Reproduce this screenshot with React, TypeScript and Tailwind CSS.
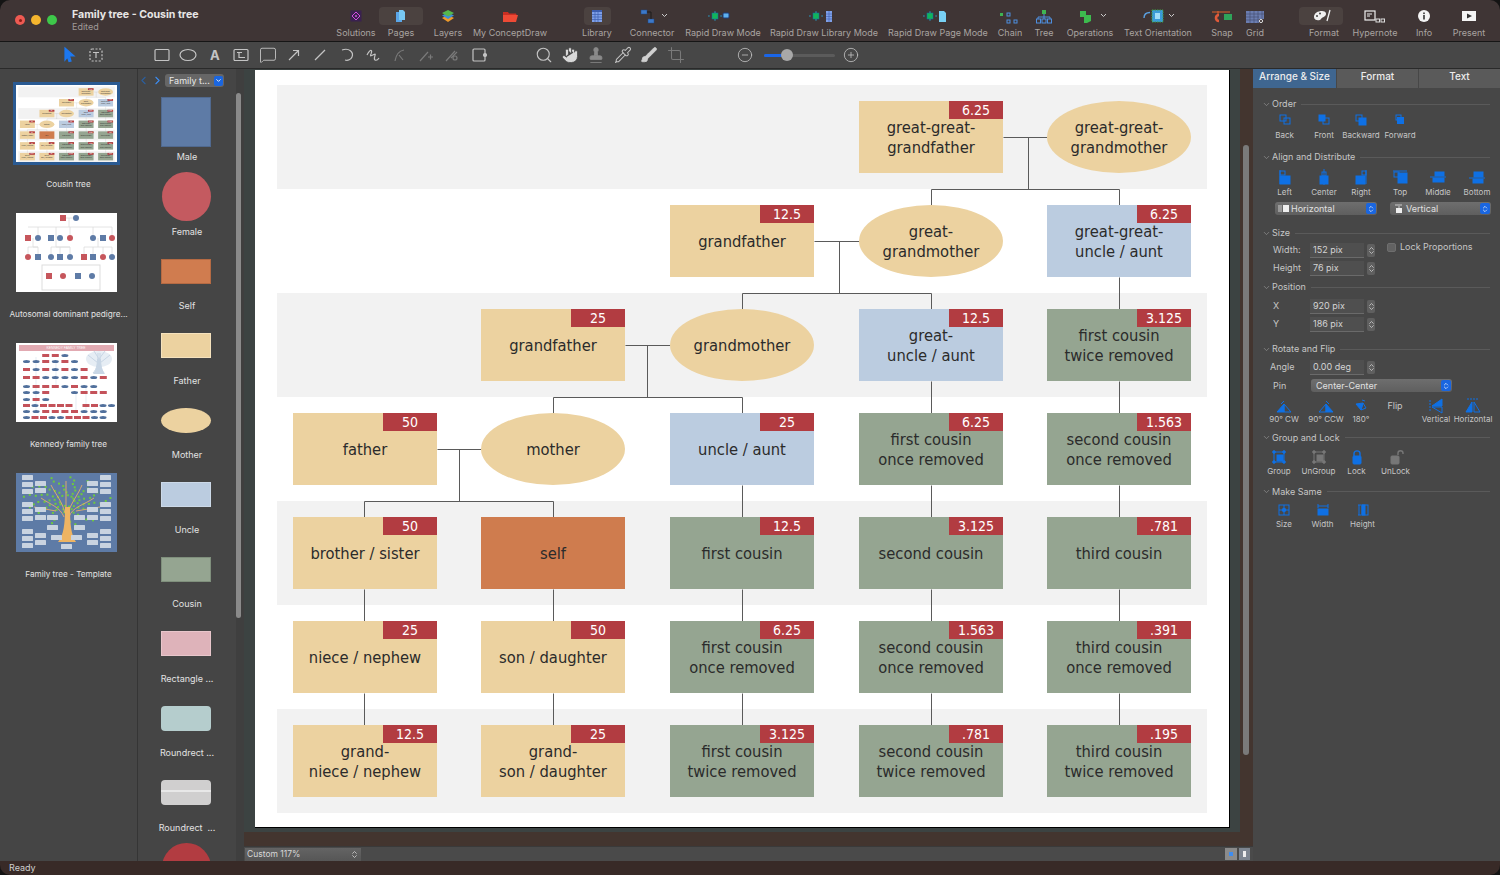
import React from "react";
import { Search, Hand, Pipette, Crop, CirclePlus, CircleMinus, MessageSquare, Stamp, Brush, ChevronLeft, ChevronRight, ChevronDown, ChevronsUpDown } from "lucide-react";

const TAN = "#ecd2a0", BLUE = "#bbcce0", GREEN = "#95a591", ORANGE = "#cf7c4e";
const COLS = [38, 226, 415, 604, 792];
const ROWS = [31, 135, 239, 343, 447, 551, 655];
type N = { c: number; r: number; t: string[]; tag?: string; fill: string; oval?: boolean };
const NODES: N[] = [
  { c: 3, r: 0, t: ["great-great-", "grandfather"], tag: "6.25", fill: TAN },
  { c: 4, r: 0, t: ["great-great-", "grandmother"], fill: TAN, oval: true },
  { c: 2, r: 1, t: ["grandfather"], tag: "12.5", fill: TAN },
  { c: 3, r: 1, t: ["great-", "grandmother"], fill: TAN, oval: true },
  { c: 4, r: 1, t: ["great-great-", "uncle / aunt"], tag: "6.25", fill: BLUE },
  { c: 1, r: 2, t: ["grandfather"], tag: "25", fill: TAN },
  { c: 2, r: 2, t: ["grandmother"], fill: TAN, oval: true },
  { c: 3, r: 2, t: ["great-", "uncle / aunt"], tag: "12.5", fill: BLUE },
  { c: 4, r: 2, t: ["first cousin", "twice removed"], tag: "3.125", fill: GREEN },
  { c: 0, r: 3, t: ["father"], tag: "50", fill: TAN },
  { c: 1, r: 3, t: ["mother"], fill: TAN, oval: true },
  { c: 2, r: 3, t: ["uncle / aunt"], tag: "25", fill: BLUE },
  { c: 3, r: 3, t: ["first cousin", "once removed"], tag: "6.25", fill: GREEN },
  { c: 4, r: 3, t: ["second cousin", "once removed"], tag: "1.563", fill: GREEN },
  { c: 0, r: 4, t: ["brother / sister"], tag: "50", fill: TAN },
  { c: 1, r: 4, t: ["self"], fill: ORANGE },
  { c: 2, r: 4, t: ["first cousin"], tag: "12.5", fill: GREEN },
  { c: 3, r: 4, t: ["second cousin"], tag: "3.125", fill: GREEN },
  { c: 4, r: 4, t: ["third cousin"], tag: ".781", fill: GREEN },
  { c: 0, r: 5, t: ["niece / nephew"], tag: "25", fill: TAN },
  { c: 1, r: 5, t: ["son / daughter"], tag: "50", fill: TAN },
  { c: 2, r: 5, t: ["first cousin", "once removed"], tag: "6.25", fill: GREEN },
  { c: 3, r: 5, t: ["second cousin", "once removed"], tag: "1.563", fill: GREEN },
  { c: 4, r: 5, t: ["third cousin", "once removed"], tag: ".391", fill: GREEN },
  { c: 0, r: 6, t: ["grand-", "niece / nephew"], tag: "12.5", fill: TAN },
  { c: 1, r: 6, t: ["grand-", "son / daughter"], tag: "25", fill: TAN },
  { c: 2, r: 6, t: ["first cousin", "twice removed"], tag: "3.125", fill: GREEN },
  { c: 3, r: 6, t: ["second cousin", "twice removed"], tag: ".781", fill: GREEN },
  { c: 4, r: 6, t: ["third cousin", "twice removed"], tag: ".195", fill: GREEN },
];
const BANDS = [15, 223, 431, 639];
const LINES = "M748 67H792M773 67V119M676 119H864V135M676 119V135M559 171H604M584 171V223M487 223H676V239M487 223V239M864 207V239M864 311V343M864 415V447M864 519V551M864 623V655M370 275H415M392 275V327M298 327H487V343M298 327V343M676 311V343M676 415V447M676 519V551M676 623V655M487 415V447M487 519V551M487 623V655M182 379H226M204 379V431M109 431H298V447M109 431V447M109 519V551M109 623V655M298 519V551M298 623V655";

function Diagram() {
  return (
    <div className="relative w-[974px] h-[757px] bg-white font-['DejaVu_Sans',sans-serif] [font-stretch:condensed]">
      {BANDS.map((y) => (
        <div key={y} className="absolute left-[22px] w-[930px] h-[104px] bg-[#f2f2f2]" style={{ top: y }} />
      ))}
      <svg className="absolute inset-0" width="974" height="757" fill="none">
        <path d={LINES} stroke="#5a5a5a" strokeWidth="1" transform="translate(0.5 0.5)" />
      </svg>
      {NODES.map((n, i) => (
        <div
          key={i}
          className={"absolute w-[144px] h-[72px] pt-[2px] flex flex-col items-center justify-center text-[16.400px] leading-[20px] text-[#2b2b2b] " + (n.oval ? "rounded-[50%]" : "")}
          style={{ left: COLS[n.c], top: ROWS[n.r], background: n.fill }}
        >
          {n.t.map((l) => (
            <span key={l} className="whitespace-nowrap">{l}</span>
          ))}
          {n.tag && (
            <span className="absolute right-0 top-0 w-[54px] h-[18px] bg-[#b23c41] text-white text-[14px] leading-[18px] text-center">{n.tag}</span>
          )}
        </div>
      ))}
    </div>
  );
}

function PedigreeThumb() {
  const sq = (x: number, y: number, c: string, k: string) => <rect key={k} x={x - 3} y={y - 3} width="6" height="6" fill={c} />;
  const ci = (x: number, y: number, c: string, k: string) => <circle key={k} cx={x} cy={y} r="3" fill={c} />;
  const R = "#c6565c", B = "#5e7ba6";
  return (
    <svg width="101" height="79" className="bg-white block">
      <path d="M47 5H60M53 5V14M12 14H96V25M22 14V25M40 14V25M54 14V25M77 14V25M17 25V34H22M12 34H22M12 34V44M22 34V44M40 25V34H54M35 34H54M35 34V44M54 34V44M44 34V44M82 25V34M68 34H96M68 34V44M77 34V44M87 34V44M96 34V44" stroke="#ddd" strokeWidth="0.8" fill="none" />
      <rect x="26" y="52" width="58" height="25" fill="#fff" stroke="#ddd" strokeWidth="1" />
      {sq(47, 5, R, "a")}{ci(60, 5, B, "b")}
      {sq(12, 25, R, "c")}{ci(22, 25, B, "d")}{sq(35, 25, B, "e")}{ci(44, 25, B, "f")}{ci(54, 25, R, "g")}{ci(77, 25, B, "h")}{sq(87, 25, B, "i")}{ci(96, 25, R, "j")}
      {ci(12, 44, R, "k")}{sq(22, 44, B, "l")}{ci(35, 44, B, "m")}{sq(44, 44, B, "n")}{ci(54, 44, B, "o")}{sq(68, 44, R, "p")}{sq(77, 44, B, "q")}{ci(87, 44, R, "r")}{ci(96, 44, B, "s")}
      {sq(33, 63, R, "t")}{ci(47, 63, R, "u")}{sq(62, 63, B, "v")}{ci(76, 63, B, "w")}
    </svg>
  );
}

function KennedyThumb() {
  const rows: [number, string][] = [
    [11, "..rrb"], [17, "bbrbrb"], [25, "rbrbrbr"], [33, "rrbbbbrbr"], [42, "brrrbrbb"], [48, "bbr..brrr"], [55, "brb"], [61, "rbrrrr.rrbb"], [67, "bbrrrrbbb"], [73, "brrbbrrrbb"],
  ];
  return (
    <svg width="101" height="79" className="bg-white block">
      <rect x="3" y="2" width="95" height="6" fill="#e2aab2" />
      <text x="50" y="6.3" fontSize="3.4" fill="#fff" textAnchor="middle" fontFamily="Liberation Sans">KENNEDY FAMILY TREE</text>
      <ellipse cx="83" cy="16" rx="13" ry="8" fill="#e6edf4" />
      <path d="M77 30C81 26 82 20 82 10M88 30C85 26 84 20 84 10M82 20L72 12M84 20L94 12M83 16L78 8M83 16L89 8" stroke="#c8d6e5" strokeWidth="1" fill="none" />
      <path d="M77 31C80 27 81 24 81 16H85C85 24 86 27 89 31Z" fill="#c8d6e5" />
      <path d="M20 14V70M60 50V70M70 44V68M40 20V42" stroke="#dbe5ef" strokeWidth="0.7" fill="none" />
      {rows.map(([y, s]) =>
        s.split("").map((ch, i) => {
          const x = 7 + i * (s.length > 9 ? 8.5 : 9.6);
          if (ch === ".") return null;
          return ch === "r" ? (
            <rect key={y + "-" + i} x={x} y={y} width="7" height="3" fill="#c4525a" />
          ) : (
            <ellipse key={y + "-" + i} cx={x + 3.5} cy={y + 1.5} rx="3.5" ry="1.5" fill="#51709c" />
          );
        })
      )}
    </svg>
  );
}

function TemplateThumb() {
  const cards: [number, number][] = [];
  [[6, 2], [6, 9], [6, 16], [6, 29], [6, 36], [6, 43], [6, 56], [6, 63], [6, 70], [19, 8], [19, 15], [19, 34], [19, 42], [19, 60], [19, 67], [84, 2], [84, 9], [84, 16], [84, 29], [84, 36], [84, 43], [84, 56], [84, 63], [84, 70], [71, 8], [71, 15], [71, 34], [71, 42], [71, 60], [71, 67], [31, 42], [31, 52], [58, 42], [58, 52], [35, 62], [55, 62], [45, 71]].forEach((c) => cards.push(c as [number, number]));
  const dots = Array.from({ length: 90 }, (_, i) => {
    const a = i * 2.399;
    const r = 6 + (i % 30);
    return [50 + Math.cos(a) * r * 1.25, 27 + Math.sin(a) * r * 0.72];
  });
  return (
    <svg width="101" height="79" className="bg-[#5e7ba6] block">
      {dots.map(([x, y], i) => (
        <rect key={i} x={x} y={y} width="2" height="2" fill="#6ecb3c" />
      ))}
      <path d="M25 25C35 32 44 34 48 44M78 25C68 32 56 34 53 44M35 12C40 22 46 28 49 40M66 12C62 22 56 28 52 40M50 8V44M18 34L40 38M84 34L60 38" stroke="#e7ae6a" strokeWidth="0.9" fill="none" />
      <path d="M42 69C48 62 49 50 49 34H54C54 50 55 62 60 69Z" fill="#eeb463" />
      {cards.map(([x, y], i) => (
        <rect key={i} x={x} y={y} width="11" height="5" rx="0.5" fill="#c9d3e0" />
      ))}
    </svg>
  );
}

function Thumb({ label, children, sel }: { label: string; children: React.ReactNode; sel?: boolean }) {
  return (
    <div className="h-[130px] flex flex-col items-center">
      <div className={"mr-[4px] w-[107px] h-[83px] flex justify-center " + (sel ? "bg-[#2a5a92] items-center" : "pt-px items-start")}>{children}</div>
      <div className="mt-[13px] text-[8.200px] leading-[12px] text-[#e2e2e2] whitespace-nowrap">{label}</div>
    </div>
  );
}

function LeftPanel() {
  return (
    <div className="w-[138px] shrink-0 border-r border-[#353535] pt-[13px] flex flex-col items-center bg-[#454545]">
      <Thumb label="Cousin tree" sel>
        <div className="w-[101px] h-[77px] overflow-hidden">
          <div className="origin-top-left scale-[0.1037]"><Diagram /></div>
        </div>
      </Thumb>
      <Thumb label="Autosomal dominant pedigre..."><PedigreeThumb /></Thumb>
      <Thumb label="Kennedy family tree"><KennedyThumb /></Thumb>
      <Thumb label="Family tree - Template"><TemplateThumb /></Thumb>
    </div>
  );
}

const LIB: { l: string; s: string; n?: boolean }[] = [
  { l: "Male", s: "w-[50px] h-[50px] bg-[#5e7ba6] border border-[#50698f]" },
  { l: "Female", s: "w-[49px] h-[49px] rounded-full bg-[#c45a60]" },
  { l: "Self", s: "w-[50px] h-[25px] bg-[#d07c4f] border border-[#b56a43]" },
  { l: "Father", s: "w-[50px] h-[25px] bg-[#ecd2a0] border border-[#f5e2bd]" },
  { l: "Mother", s: "w-[50px] h-[25px] rounded-[50%] bg-[#ecd2a0]" },
  { l: "Uncle", s: "w-[50px] h-[25px] bg-[#bbcce0] border border-[#ccd9e8]" },
  { l: "Cousin", s: "w-[50px] h-[25px] bg-[#95a591] border border-[#7f8f7c]" },
  { l: "Rectangle ...", s: "w-[50px] h-[25px] bg-[#deb3ba] border border-[#e8c6cb]" },
  { l: "Roundrect ...", s: "w-[50px] h-[25px] rounded-[4px] bg-[#b5cdcd]" },
  { l: "Roundrect  ...", s: "w-[50px] h-[25px] rounded-[4px] bg-[#d0cfcf]", n: true },
  { l: "", s: "w-[49px] h-[49px] rounded-full bg-[#b23c41]" },
];

function Library() {
  return (
    <div className="w-[98px] shrink-0 flex flex-col bg-[#454545]">
      <div className="h-[28px] shrink-0 flex items-center pb-[5px]">
        <ChevronLeft size={13} className="-ml-[1px] text-[#2b5f9e]" />
        <ChevronRight size={13} className="ml-[1px] text-[#3d8cf0]" />
        <div className="ml-[1px] w-[59px] h-[13px] rounded-[3px] bg-[#666] flex items-center pl-[4px] text-[9px] text-[#e8e8e8]">
          <span className="flex-1 whitespace-nowrap">Family t...</span>
          <span className="w-[9px] h-[10px] mr-[1px] rounded-[2px] bg-[#1a66e0] flex items-center justify-center"><ChevronDown size={7} className="text-white" strokeWidth={3} /></span>
        </div>
      </div>
      {LIB.map((x, i) => (
        <div key={i} className="h-[74.5px] shrink-0 flex flex-col items-center relative">
          <div className="h-[50px] mr-[2px] flex items-center justify-center">
            <div className={x.s + " relative overflow-hidden"}>
              {x.n && <div className="absolute left-0 right-0 top-[10px] h-[2px] bg-[#e8e8e8]" />}
            </div>
          </div>
          <div className="mt-[4px] h-[12px] text-[9px] leading-[12px] text-[#e2e2e2] whitespace-pre">{x.l}</div>
        </div>
      ))}
    </div>
  );
}

/* ---------- top toolbar icons ---------- */
const I = ({ children }: { children: React.ReactNode }) => (
  <svg width="30" height="18" viewBox="0 0 30 18" fill="none">{children}</svg>
);
const RD = (extra: React.ReactNode) => (
  <svg width="36" height="18" viewBox="0 0 36 18" fill="none">
    <rect x="7" y="6" width="6" height="6" fill="#13b45a" stroke="#0a6fae" strokeWidth="0.5" />
    <path d="M5 9L3.5 8V10ZM15 9L16.5 8V10ZM10 4L9 5.5H11ZM10 14L9 12.500H11Z" fill="#28a7d8" />
    {extra}
  </svg>
);
const ICONS: Record<string, React.ReactNode> = {
  Solutions: <I><rect x="9.500" y="3.500" width="11" height="11" fill="#3a2150" /><path d="M15 5L19 9L15 13L11 9Z" stroke="#d04fe0" strokeWidth="1" /><circle cx="15" cy="9" r="1" fill="#d04fe0" /></I>,
  Pages: <I><path d="M10 5H15L16 6V15H10Z" fill="#5aa6e8" /><path d="M13 3H17L19 5V13H13Z" fill="#78c9f4" /></I>,
  Layers: <I><path d="M15 8L21 11L15 15L9 11Z" fill="#ee9a2b" /><path d="M15 5.500L21 8.500L15 12L9 8.500Z" fill="#3f8fd6" /><path d="M15 3L21 6L15 9.500L9 6Z" fill="#56b84c" /></I>,
  "My ConceptDraw": <I><path d="M8 5H13L14 6.500H21L22 9H8Z" fill="#c92f23" /><path d="M8 8H23L21 15H8Z" fill="#ee4a35" /></I>,
  Library: <I><rect x="10" y="3" width="10" height="12" fill="#7fa0e8" /><rect x="10" y="3" width="10" height="2" fill="#3c5eb0" /><path d="M10 7.500H20M10 10H20M10 12.500H20M13 5V15M16 5V15" stroke="#3c5eb0" strokeWidth="0.7" /></I>,
  Connector: <svg width="40" height="18" viewBox="0 0 40 18" fill="none"><rect x="9" y="3" width="6" height="4" fill="#3d78c8" stroke="#1c4a86" strokeWidth="0.5" /><rect x="16" y="12" width="6" height="4" fill="#3d78c8" stroke="#1c4a86" strokeWidth="0.5" /><path d="M15 5H19V12" stroke="#1c1c1c" strokeWidth="1" /><path d="M30 7L32.500 9.500L35 7" stroke="#ccc" strokeWidth="1" /></svg>,
  "Rapid Draw Mode": RD(<><rect x="18" y="6" width="6" height="5" rx="1" fill="#5fb0ee" stroke="#1d3f80" strokeWidth="1" /></>),
  "Rapid Draw Library Mode": RD(<><rect x="20" y="4" width="6" height="11" fill="#7fa0e8" /><path d="M20 7H26M20 9.500H26M20 12H26M23 4V15" stroke="#3c5eb0" strokeWidth="0.6" /></>),
  "Rapid Draw Page Mode": RD(<><path d="M19 4H24L26 6V15H19Z" fill="#78d0f4" /></>),
  Chain: <I><rect x="5" y="6" width="3" height="3" fill="#3fb452" /><rect x="12" y="6" width="3" height="3" stroke="#4e8fe0" /><rect x="12" y="13" width="3" height="3" stroke="#4e8fe0" /><rect x="19" y="13" width="3" height="3" stroke="#4e8fe0" /></I>,
  Tree: <I><rect x="13" y="3" width="4" height="4" fill="#3fb452" /><path d="M15 7V9M9 12V10H21V12M15 9V12" stroke="#4e8fe0" /><rect x="7.500" y="12" width="4" height="4" stroke="#4e8fe0" /><rect x="13" y="12" width="4" height="4" stroke="#4e8fe0" /><rect x="18.500" y="12" width="4" height="4" stroke="#4e8fe0" /></I>,
  Operations: <svg width="40" height="18" viewBox="0 0 40 18" fill="none"><path d="M10 4H16V8H21V14L17 16H14V10H10Z" fill="#3dbb4e" /><path d="M31 7L33.500 9.500L36 7" stroke="#ccc" strokeWidth="1" /></svg>,
  "Text Orientation": <svg width="56" height="18" viewBox="0 0 56 18" fill="none"><path d="M14 11C14 7 16 5.500 20 5.500" stroke="#5aa0e0" strokeWidth="1.4" /><rect x="22" y="3" width="11" height="12" fill="#3a9bd8" stroke="#43a047" strokeDasharray="1.5 1" /><rect x="25" y="6" width="5" height="6" fill="#9fdcf8" /><path d="M39 7L41.500 9.500L44 7" stroke="#ccc" strokeWidth="1" /></svg>,
  Snap: <I><path d="M5 5H23" stroke="#e0602c" strokeWidth="1" /><path d="M12 8C8 8 8 14 12 14" stroke="#e05a3a" strokeWidth="2.600" /><rect x="17" y="7" width="8" height="6" fill="#2fa35a" /><path d="M11 4V7" stroke="#e0602c" /></I>,
  Grid: <I><path d="M6 4H24V12H19V16H6Z" fill="#6b7db0" /><path d="M6 7H24M6 10H19M6 13H19M10 4V16M14 4V16M18 4V16M22 4V12" stroke="#3f4a6c" strokeWidth="0.6" /><circle cx="21" cy="14" r="1.600" stroke="#ddd" /></I>,
  Format: <I><g transform="translate(-3 0)"><path d="M8 10C8 6 12 4 16 4C20 4 21 7 19 9C17 11 16 10 15 12C14 14 8 14 8 10Z" fill="#f0f0f0" /><circle cx="11" cy="9" r="1" fill="#444" /><circle cx="14" cy="6.500" r="1" fill="#444" /><path d="M24 3L21 14" stroke="#f0f0f0" strokeWidth="1.300" /></g></I>,
  Hypernote: <I><rect x="5" y="4" width="10" height="9" stroke="#eee" strokeWidth="1.200" /><path d="M7 7H12M7 9H10" stroke="#eee" /><rect x="16" y="12" width="3.500" height="3" stroke="#ddd" /><rect x="21" y="12" width="3.500" height="3" stroke="#ddd" /></I>,
  Info: <I><circle cx="15" cy="9" r="6" fill="#f4f4f4" /><rect x="14.200" y="8" width="1.600" height="4.500" fill="#333" /><rect x="14.200" y="5.500" width="1.600" height="1.600" fill="#333" /></I>,
  Present: <I><rect x="8" y="4" width="14" height="10" fill="#f4f4f4" /><path d="M13 6.500L18 9L13 11.500Z" fill="#333" /></I>,
};

const TOOLS: { l: string; c: string; bg?: string }[] = [
  { l: "Solutions", c: "w-[44px]" },
  { l: "Pages", c: "w-[46px]", bg: "w-[44px]" },
  { l: "Layers", c: "w-[48px]" },
  { l: "My ConceptDraw", c: "w-[76px]" },
  { l: "Library", c: "w-[50px] ml-[24px]", bg: "w-[27px]" },
  { l: "Connector", c: "w-[48px] ml-[6px]" },
  { l: "Rapid Draw Mode", c: "w-[78px] ml-[8px]" },
  { l: "Rapid Draw Library Mode", c: "w-[108px] ml-[8px]" },
  { l: "Rapid Draw Page Mode", c: "w-[100px] ml-[10px]" },
  { l: "Chain", c: "w-[28px] ml-[8px]" },
  { l: "Tree", c: "w-[28px] ml-[6px]" },
  { l: "Operations", c: "w-[52px] ml-[6px]" },
  { l: "Text Orientation", c: "w-[72px] ml-[6px]" },
  { l: "Snap", c: "w-[28px] ml-[14px]" },
  { l: "Grid", c: "w-[28px] ml-[5px]" },
  { l: "Format", c: "w-[48px] ml-[31px]", bg: "w-[44px] -ml-[6px]" },
  { l: "Hypernote", c: "w-[46px] ml-[4px]" },
  { l: "Info", c: "w-[32px] ml-[10px]" },
  { l: "Present", c: "w-[38px] ml-[10px]" },
];

function TitleBar() {
  return (
    <div className="h-[42px] shrink-0 flex bg-[#3f3535] border-b border-[#161616]">
      <div className="w-[334px] shrink-0 flex">
        <div className="flex gap-[6px] pl-[15px] pt-[15px]">
          <span className="w-[10px] h-[10px] rounded-full bg-[#ee5a52] flex items-center justify-center"><span className="w-[3px] h-[3px] rounded-full bg-[#8c1c16]" /></span>
          <span className="w-[10px] h-[10px] rounded-full bg-[#f4b52e]" />
          <span className="w-[10px] h-[10px] rounded-full bg-[#3ec84a]" />
        </div>
        <div className="ml-[15px] pt-[9px]">
          <div className="text-[10.600px] leading-[12px] font-bold text-[#e8e6e5] whitespace-nowrap">Family tree - Cousin tree</div>
          <div className="text-[9px] leading-[11px] mt-[0px] text-[#a09a98]">Edited</div>
        </div>
      </div>
      {TOOLS.map((t) => (
        <div key={t.l} className={t.c + " shrink-0 relative flex flex-col items-center pt-[7px]"}>
          {t.bg && <div className={t.bg + " absolute top-[7px] h-[18px] rounded-[4px] bg-[#4b4240]"} />}
          <div className="relative h-[18px] flex items-center justify-center">{ICONS[t.l]}</div>
          <div className="mt-[2px] text-[9px] leading-[12px] text-[#a9a4a1] whitespace-nowrap">{t.l}</div>
        </div>
      ))}
    </div>
  );
}

/* ---------- drawing toolbar ---------- */
const S = ({ children, c = "#c4c4c4" }: { children: React.ReactNode; c?: string }) => (
  <svg width="18" height="18" viewBox="0 0 18 18" fill="none" stroke={c} strokeWidth="1.200">{children}</svg>
);
function DrawBar() {
  const ic = "text-[#c4c4c4]";
  return (
    <div className="h-[27px] shrink-0 flex items-center pl-[60px] bg-[#474747] border-b border-[#2a2a2a]">
      <S c="#1c78f0"><path d="M5 2L14 10H9.500L11 15L9 15.500L7.500 11L5 14Z" fill="#1c78f0" /></S>
      <div className="ml-[9px]"><S><rect x="3" y="3" width="12" height="12" rx="2" strokeDasharray="2 1.500" /><path d="M6 6.500H12M9 6.500V12" /></S></div>
      <div className="ml-[48px] flex gap-[8.400px] items-center">
        <S><rect x="2" y="3.500" width="14" height="11" rx="1" /></S>
        <S><ellipse cx="9" cy="9" rx="8" ry="5.500" /></S>
        <div className="w-[18px] text-center text-[13px] font-bold leading-[18px] text-[#c4c4c4]">A</div>
        <S><rect x="2" y="3.500" width="14" height="11" rx="1" /><path d="M5 6.500H10M7 6.500V11.500H13" /></S>
        <MessageSquare size={18} strokeWidth={1.2} className={ic} />
        <S><path d="M4 14L13 5M8 4.500H13.500V10" /></S>
        <S><path d="M4 14L14 4" /></S>
        <S><path d="M4 4C11 1.500 16 6 14 11C13 13.500 10 15 7 14" /></S>
        <S><path d="M3 9C6 3 9 3 7 8C5 12 10 8 11 8C12 8 9 13 11 14C13 15 15 12 15 12" /></S>
        <S c="#7a7a7a"><path d="M4 15C5 9 7 5 13 4M8 9L12 14" /></S>
        <S c="#7a7a7a"><path d="M3 15L11 6M11 11H16M13.500 8.500V13.500" /></S>
        <S c="#7a7a7a"><path d="M3 15L12 5M8 12L14 6" /><circle cx="12" cy="12" r="2" /></S>
        <S><rect x="3" y="3" width="12" height="12" rx="1" /><circle cx="15" cy="9" r="1.500" fill="#c4c4c4" /></S>
      </div>
      <div className="ml-[47px] flex gap-[8.400px] items-center">
        <Search size={18} className={ic} strokeWidth={1.500} />
        <Hand size={18} className="text-[#474747]" fill="#d8d8d8" strokeWidth={1} />
        <Stamp size={18} className="text-[#8a8a8a]" fill="#8a8a8a" strokeWidth={1} />
        <Pipette size={18} className={ic} strokeWidth={1.400} />
        <Brush size={18} className="text-[#d0d0d0]" fill="#d0d0d0" strokeWidth={1} />
        <Crop size={18} className="text-[#7a7a7a]" strokeWidth={1.400} />
      </div>
      <CircleMinus size={16} className="ml-[52px] text-[#c4c4c4]" strokeWidth={1.200} />
      <div className="ml-[11px] w-[71px] h-[3px] rounded-full bg-[#5b5b5b] relative">
        <div className="h-full w-[20px] rounded-full bg-[#1a66e8]" />
        <div className="absolute left-[17px] -top-[4.500px] w-[12px] h-[12px] rounded-full bg-[#a8a8a8]" />
      </div>
      <CirclePlus size={16} className="ml-[8px] text-[#c4c4c4]" strokeWidth={1.200} />
    </div>
  );
}

/* ---------- right panel ---------- */
const B = "#0f70e4";
const Bx = ({ children, w = 18, h = 16 }: { children: React.ReactNode; w?: number; h?: number }) => (
  <svg width={w} height={h} viewBox="0 0 18 16" fill="none" stroke={B} strokeWidth="1">{children}</svg>
);
const ORDER = [
  <Bx><rect x="4" y="3" width="6" height="6" /><rect x="8" y="6" width="6" height="6" /></Bx>,
  <Bx><rect x="4" y="3" width="6" height="6" fill={B} /><rect x="8" y="6" width="6" height="6" /></Bx>,
  <Bx><rect x="4" y="3" width="6" height="6" /><rect x="7" y="6" width="7" height="7" fill={B} /></Bx>,
  <Bx><rect x="5" y="3" width="5" height="5" /><rect x="6" y="5" width="7" height="7" fill={B} stroke="none" /></Bx>,
];
const ALIGN = [
  <Bx><path d="M4 1V15" /><rect x="4" y="2" width="5" height="4" /><rect x="4" y="7" width="10" height="8" fill={B} /></Bx>,
  <Bx><path d="M9 0V16" /><rect x="7" y="3" width="4" height="4" /><rect x="5" y="7" width="8" height="8" fill={B} /></Bx>,
  <Bx><path d="M14 1V15" /><rect x="10" y="2" width="4" height="4" /><rect x="4" y="7" width="9" height="8" fill={B} /></Bx>,
  <Bx><path d="M2 2H16" /><rect x="3" y="3" width="5" height="5" /><rect x="7" y="4" width="9" height="10" fill={B} /></Bx>,
  <Bx><path d="M1 8H17" /><rect x="6" y="3" width="9" height="4" fill={B} /><rect x="4" y="9" width="11" height="4" fill={B} /></Bx>,
  <Bx><path d="M1 9H17" /><rect x="6" y="3" width="9" height="5" fill={B} /><rect x="5" y="10" width="10" height="4" fill={B} /></Bx>,
];
const ROT = [
  <Bx><path d="M2 14L9 6V14Z" fill={B} /><path d="M9 6L16 14H9Z" /><path d="M6 6L9 3" /></Bx>,
  <Bx><path d="M2 14L9 6V14Z" /><path d="M9 6L16 14H9Z" fill={B} /><path d="M12 6L9 3" /></Bx>,
  <Bx><path d="M4 6L11 5L9 12Z" fill={B} /><path d="M11 5L14 10L9 12Z" /><path d="M10 2L13 3" /></Bx>,
];
const FLIP = [
  <Bx><path d="M3 2V14" strokeDasharray="2 1" /><path d="M5 8L15 1V8Z" fill={B} /><path d="M5 9H15V15Z" /></Bx>,
  <Bx><path d="M3 1H15" strokeDasharray="2 1" /><path d="M8 4V14H2Z" fill={B} /><path d="M10 4L16 14H10Z" /></Bx>,
];
const LOCKS = [
  <Bx><rect x="4" y="3" width="10" height="10" /><rect x="7" y="6" width="6" height="6" fill={B} /><circle cx="4" cy="3" r="1.300" fill={B} /><circle cx="14" cy="3" r="1.300" fill={B} /><circle cx="4" cy="13" r="1.300" fill={B} /><circle cx="14" cy="13" r="1.300" fill={B} /></Bx>,
  <svg width="18" height="16" viewBox="0 0 18 16" fill="none" stroke="#777"><rect x="4" y="3" width="10" height="10" /><rect x="7" y="6" width="6" height="6" fill="#777" /><circle cx="4" cy="3" r="1.300" fill="#777" /><circle cx="14" cy="3" r="1.300" fill="#777" /><circle cx="4" cy="13" r="1.300" fill="#777" /><circle cx="14" cy="13" r="1.300" fill="#777" /></svg>,
  <Bx><path d="M6 7V4.500C6 1 12 1 12 4.500V7" strokeWidth="1.400" /><rect x="5" y="7" width="8" height="8" rx="1" fill={B} /></Bx>,
  <svg width="18" height="16" viewBox="0 0 18 16" fill="none" stroke="#777"><path d="M11 6V4C11 1 16 1 16 4V5" strokeWidth="1.400" /><rect x="4" y="7" width="8" height="8" rx="1" fill="#777" /></svg>,
];
const SAME = [
  <Bx><rect x="4" y="3" width="10" height="10" /><path d="M9 3V13M4 8H14" /><circle cx="9" cy="8" r="1.800" fill={B} /></Bx>,
  <Bx><path d="M4 2V6M14 2V6M4 4H14" /><rect x="4" y="7" width="10" height="6" fill={B} /></Bx>,
  <Bx><path d="M4 3H7M4 13H7M5 3V13" /><rect x="8" y="3" width="6" height="10" /><rect x="8" y="3" width="3" height="10" fill={B} /></Bx>,
];

function Head({ t, c }: { t: string; c: string }) {
  return (
    <div className={"h-[12px] flex items-center pl-[9px] pr-[10px] " + c}>
      <ChevronDown size={9} className="text-[#8e8e8e]" />
      <span className="ml-[1px] text-[9px] leading-[12px] text-[#c6c6c6] whitespace-nowrap">{t}</span>
      <span className="ml-[5px] flex-1 h-px bg-[#5a5a5a]" />
    </div>
  );
}
function Cell({ w, icon, l, ih, lh = "h-[12px]" }: { w: string; icon: React.ReactNode; l: string; ih: string; lh?: string }) {
  return (
    <div className={w + " flex flex-col items-center shrink-0"}>
      <div className={ih + " flex items-center justify-center"}>{icon}</div>
      <div className={lh + " text-[8px] leading-[12px] text-[#c6c6c6] whitespace-nowrap"}>{l}</div>
    </div>
  );
}
function Stepper() {
  return (
    <div className="ml-[3px] w-[8px] h-[13px] rounded-[2px] bg-[#5f5f5f] flex flex-col items-center justify-center">
      <ChevronsUpDown size={9} className="text-[#d0d0d0]" />
    </div>
  );
}
function Field({ label, v, c }: { label: string; v: string; c: string }) {
  return (
    <div className={"h-[16px] flex items-center " + c}>
      <span className={"text-[9px] text-[#c6c6c6] " + (label === "Angle" ? "ml-[17px] w-[40px]" : "ml-[20px] w-[37px]")}>{label}</span>
      <div className="w-[54px] h-[15px] bg-[#4f4f4f] border-b border-[#6a6a6a] pl-[3px] text-[9px] leading-[14px] text-[#d4d4d4]">{v}</div>
      <Stepper />
    </div>
  );
}
function Sel({ t, w, icon }: { t: string; w: string; icon?: React.ReactNode }) {
  return (
    <div className={w + " h-[13px] rounded-[3px] bg-gradient-to-b from-[#6e6e6e] to-[#5f5f5f] flex items-center pl-[3px] text-[9px] text-[#e0e0e0]"}>
      {icon}
      <span className="flex-1 ml-[2px] whitespace-nowrap">{t}</span>
      <span className="w-[10px] h-[11px] mr-[1px] rounded-[2px] bg-[#1a66e0] flex items-center justify-center"><ChevronsUpDown size={8} className="text-white" /></span>
    </div>
  );
}

function RightPanel() {
  return (
    <div className="w-[247px] shrink-0 -mt-[4px] relative bg-[#474747] flex flex-col">
      <div className="h-[23px] shrink-0 flex text-[10px] font-medium text-[#ececec]">
        <div className="w-[83px] bg-[#3f6690] flex items-center justify-center whitespace-nowrap">Arrange &amp; Size</div>
        <div className="ml-px w-[81px] bg-[#5a5a5a] flex items-center justify-center">Format</div>
        <div className="ml-px w-[81px] bg-[#5a5a5a] flex items-center justify-center">Text</div>
      </div>
      <Head t="Order" c="mt-[10px]" />
      <div className="mt-[1px] pl-[12px] flex">
        {["Back", "Front", "Backward", "Forward"].map((l, i) => (
          <Cell key={l} w={["w-[39px]", "w-[40px]", "w-[34px]", "w-[44px]"][i]} l={l} ih="h-[18px]" icon={ORDER[i]} />
        ))}
      </div>
      <Head t="Align and Distribute" c="mt-[10px]" />
      <div className="mt-[5px] pl-[12px] flex">
        {["Left", "Center", "Right", "Top", "Middle", "Bottom"].map((l, i) => (
          <Cell key={l} w={["w-[39px]", "w-[40px]", "w-[34px]", "w-[44px]", "w-[32px]", "w-[46px]"][i]} l={l} ih="h-[18px]" icon={ALIGN[i]} />
        ))}
      </div>
      <div className="mt-[4px] pl-[22px] flex gap-[13px]">
        <Sel t="Horizontal" w="w-[102px]" icon={<svg width="11" height="9"><path d="M1 1V8M3 1V8" stroke="#ccc" /><rect x="5" y="1" width="6" height="7" fill="#eee" /></svg>} />
        <Sel t="Vertical" w="w-[101px]" icon={<svg width="11" height="9"><path d="M2 1H9M5 3H7" stroke="#ccc" /><rect x="3" y="4" width="6" height="5" fill="#eee" /></svg>} />
      </div>
      <Head t="Size" c="mt-[12px]" />
      <div className="relative">
        <Field label="Width:" v="152 pix" c="mt-[3px]" />
        <Field label="Height" v="76 pix" c="mt-[2px]" />
        <div className="absolute left-[134px] top-[2px] flex items-center">
          <span className="w-[9px] h-[9px] rounded-[2px] bg-[#626262] border border-[#6e6e6e]" />
          <span className="ml-[4px] text-[9px] leading-[12px] text-[#c6c6c6] whitespace-nowrap">Lock Proportions</span>
        </div>
      </div>
      <Head t="Position" c="mt-[5px]" />
      <Field label="X" v="920 pix" c="mt-[5px]" />
      <Field label="Y" v="186 pix" c="mt-[2px]" />
      <Head t="Rotate and Flip" c="mt-[11px]" />
      <Field label="Angle" v="0.00 deg" c="mt-[4px]" />
      <div className="mt-[4px] flex items-center">
        <span className="ml-[20px] w-[38px] text-[9px] text-[#c6c6c6]">Pin</span>
        <Sel t="Center-Center" w="w-[141px]" />
      </div>
      <div className="mt-[6px] pl-[10px] flex">
        <Cell w="w-[42px]" l="90° CW" ih="h-[14px]" lh="h-[11px]" icon={ROT[0]} />
        <Cell w="w-[42px]" l="90° CCW" ih="h-[14px]" lh="h-[11px]" icon={ROT[1]} />
        <Cell w="w-[28px]" l="180°" ih="h-[14px]" lh="h-[11px]" icon={ROT[2]} />
        <div className="w-[40px] text-center text-[9px] text-[#c6c6c6] leading-[14px]">Flip</div>
        <Cell w="w-[42px]" l="Vertical" ih="h-[14px]" lh="h-[11px]" icon={FLIP[0]} />
        <Cell w="w-[32px]" l="Horizontal" ih="h-[14px]" lh="h-[11px]" icon={FLIP[1]} />
      </div>
      <Head t="Group and Lock" c="mt-[8px]" />
      <div className="mt-[5px] pl-[7px] flex">
        {["Group", "UnGroup", "Lock", "UnLock"].map((l, i) => (
          <Cell key={l} w={["w-[38px]", "w-[41px]", "w-[35px]", "w-[43px]"][i]} l={l} ih="h-[16px]" icon={LOCKS[i]} />
        ))}
      </div>
      <Head t="Make Same" c="mt-[9px]" />
      <div className="mt-[5px] pl-[12px] flex">
        {["Size", "Width", "Height"].map((l, i) => (
          <Cell key={l} w={["w-[38px]", "w-[39px]", "w-[41px]"][i]} l={l} ih="h-[15px]" icon={SAME[i]} />
        ))}
      </div>
    </div>
  );
}

function Center() {
  return (
    <div className="w-[1009px] shrink-0 flex flex-col bg-[#43352f]">
      <div className="flex-1 flex min-h-0">
        <div className="w-[996px] h-[763px] bg-[#3c4342] pl-[11px] pt-px shrink-0">
          <div className="w-[975px] border-r border-b border-black"><Diagram /></div>
        </div>
        <div className="flex-1 pt-[76px] pl-[3px]">
          <div className="w-[6px] h-[610px] rounded-full bg-[#7a7a7a]" />
        </div>
      </div>
      <div className="h-[15px] shrink-0 flex items-center bg-[#4a4a4a] border-t border-[#3a3a3a]">
        <div className="w-[116px] h-[13px] ml-px bg-gradient-to-b from-[#646464] to-[#565656] flex items-center pl-[2px] text-[8.500px] text-[#d8d8d8]">
          <span className="flex-1">Custom 117%</span>
          <ChevronsUpDown size={9} className="mr-[2px]" />
        </div>
        <div className="ml-[864px] w-[12px] h-[12px] bg-[#8b8b8b] flex items-center justify-center"><span className="w-[4px] h-[4px] bg-[#3d8cf0]" /></div>
        <div className="ml-[2px] w-[11px] h-[12px] bg-[#7d8590] flex items-center justify-center"><span className="w-[3px] h-[6px] bg-[#eee]" /></div>
      </div>
    </div>
  );
}

export default function App() {
  return (
    <div className="w-[1500px] h-[875px] bg-[#141414]">
      <div className="w-full h-full rounded-[10px] overflow-hidden flex flex-col font-['Inter','Liberation_Sans',sans-serif]">
        <TitleBar />
        <DrawBar />
        <div className="h-[792px] shrink-0 flex overflow-hidden bg-[#454545]">
          <LeftPanel />
          <Library />
          <div className="w-[8px] shrink-0 pt-[24px] bg-[#3f3f3f]">
            <div className="w-[5px] h-[525px] rounded-full bg-[#8a8a8a]" />
          </div>
          <Center />
          <RightPanel />
        </div>
        <div className="h-[14px] shrink-0 bg-[#382a27] pl-[9px] text-[9px] leading-[13px] text-[#cfcfcf]">Ready</div>
      </div>
    </div>
  );
}
